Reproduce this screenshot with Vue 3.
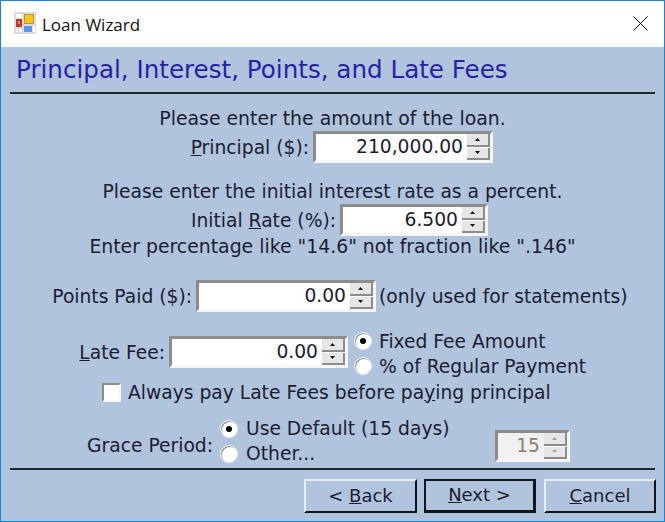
<script setup>
// Loan wizard dialog, step: principal, interest, points and late fees
const upPts = '2.5,0 5,3 0,3'
</script>

<template>
  <div class="window">
    <header class="titlebar">
      <svg class="app-icon" width="22" height="22" viewBox="0 0 22 22">
        <rect x="0" y="0" width="22" height="22" fill="#dcdcdc" />
        <rect x="2" y="2" width="6" height="4" fill="#fff" />
        <rect x="10" y="2" width="10" height="10" fill="#b8962e" />
        <rect x="11" y="3" width="8" height="8" fill="#fcc51e" />
        <rect x="2" y="7" width="6" height="8" fill="#c0392b" />
        <rect x="4" y="9" width="2" height="3" fill="#e08070" />
        <rect x="2" y="17" width="2" height="3" fill="#fff" />
        <rect x="5" y="17" width="3" height="3" fill="#fff" />
        <rect x="10" y="14" width="8" height="6" fill="#5f95e6" />
        <rect x="19" y="14" width="2" height="6" fill="#fff" />
      </svg>
      <span class="window-title">Loan Wizard</span>
      <svg class="close" width="15" height="15" viewBox="0 0 15 15">
        <path d="M0.5 0.5 L14.5 14.5 M14.5 0.5 L0.5 14.5" stroke="#000" stroke-width="1" fill="none" />
      </svg>
    </header>

    <main class="body">
      <h1 class="heading">Principal, Interest, Points, and Late Fees</h1>
      <div class="rule"></div>

      <p class="center line-1">Please enter the amount of the loan.</p>
      <div class="row row-principal">
        <label><u>P</u>rincipal ($):</label>
        <div class="spin w-principal">
          <span class="value">210,000.00</span>
          <div class="arrows">
            <span class="arrow"><svg width="5" height="3"><polygon :points="upPts" /></svg></span>
            <span class="arrow"><svg class="down" width="5" height="3"><polygon :points="upPts" /></svg></span>
          </div>
        </div>
      </div>

      <p class="center line-2">Please enter the initial interest rate as a percent.</p>
      <div class="row row-rate">
        <label>Initial <u>R</u>ate (%):</label>
        <div class="spin w-rate">
          <span class="value">6.500</span>
          <div class="arrows">
            <span class="arrow"><svg width="5" height="3"><polygon :points="upPts" /></svg></span>
            <span class="arrow"><svg class="down" width="5" height="3"><polygon :points="upPts" /></svg></span>
          </div>
        </div>
      </div>
      <p class="center line-3">Enter percentage like "14.6" not fraction like ".146"</p>

      <div class="row row-points">
        <label>Points Paid ($):</label>
        <div class="spin w-points">
          <span class="value">0.00</span>
          <div class="arrows">
            <span class="arrow"><svg width="5" height="3"><polygon :points="upPts" /></svg></span>
            <span class="arrow"><svg class="down" width="5" height="3"><polygon :points="upPts" /></svg></span>
          </div>
        </div>
        <span class="note">(only used for statements)</span>
      </div>

      <div class="row row-late">
        <label><u>L</u>ate Fee:</label>
        <div class="spin w-late">
          <span class="value">0.00</span>
          <div class="arrows">
            <span class="arrow"><svg width="5" height="3"><polygon :points="upPts" /></svg></span>
            <span class="arrow"><svg class="down" width="5" height="3"><polygon :points="upPts" /></svg></span>
          </div>
        </div>
        <div class="radios late-radios">
          <div class="radio-row"><span class="radio checked"></span>Fixed Fee Amount</div>
          <div class="radio-row"><span class="radio"></span>% of Regular Payment</div>
        </div>
      </div>

      <div class="row row-check">
        <span class="checkbox"></span>
        <span>Always pay Late Fees before pa<u>y</u>ing principal</span>
      </div>

      <div class="row row-grace">
        <label>Grace Period:</label>
        <div class="radios grace-radios">
          <div class="radio-row"><span class="radio checked"></span>Use Default (15 days)</div>
          <div class="radio-row"><span class="radio"></span>Other...</div>
        </div>
        <div class="spin w-grace disabled">
          <span class="value">15</span>
          <div class="arrows">
            <span class="arrow"><svg width="5" height="3"><polygon :points="upPts" /></svg></span>
            <span class="arrow"><svg class="down" width="5" height="3"><polygon :points="upPts" /></svg></span>
          </div>
        </div>
      </div>

      <div class="rule rule-bottom"></div>

      <footer class="buttons">
        <button class="back">&lt; <u>B</u>ack</button>
        <button class="primary"><u>N</u>ext &gt;</button>
        <button class="cancel"><u>C</u>ancel</button>
      </footer>
    </main>
  </div>
</template>

<style>
html, body {
  margin: 0;
  padding: 0;
}
</style>

<style scoped>
.window {
  box-sizing: border-box;
  width: 665px;
  height: 522px;
  border: 1px solid #0f86d9;
  display: flex;
  flex-direction: column;
  font-family: "DejaVu Sans", Verdana, sans-serif;
  font-size: 18.7px;
  color: #1c1c30;
  overflow: hidden;
}

.titlebar {
  box-sizing: border-box;
  height: 46px;
  background: #fff;
  display: flex;
  align-items: center;
  padding: 0 16px 2px 13px;
  flex-shrink: 0;
}
.app-icon {
  margin-right: 6px;
}
.window-title {
  font-family: "Open Sans", sans-serif;
  font-size: 17px;
  color: #111;
  flex: 1;
  margin-top: 2px;
}

.body {
  flex: 1;
  background: #b0c4de;
  padding: 0 9px;
}

.heading {
  margin: 0;
  padding: 7px 0 0 6px;
  height: 45px;
  box-sizing: border-box;
  font-size: 24.6px;
  line-height: 32px;
  font-weight: normal;
  color: #2a1fa5;
  white-space: nowrap;
}
.rule {
  height: 2px;
  background: #22272e;
}

p {
  margin: 0;
}
.center {
  text-align: center;
  line-height: 20px;
  white-space: nowrap;
}
.line-1 { margin-top: 15px; font-size: 18.85px; }
.line-2 { margin-top: 19px; }
.line-3 { margin-top: 1px; font-size: 18.85px; }

.row {
  display: flex;
  align-items: center;
  white-space: nowrap;
}
label {
  box-sizing: border-box;
  text-align: right;
  padding-right: 4px;
  flex-shrink: 0;
}
.row-principal { margin-top: 2px; }
.row-principal label { width: 303px; }
.row-rate { margin-top: 2px; }
.row-rate label { width: 330px; }
.row-points { margin-top: 23px; }
.row-points label { width: 186px; }
.row-late { margin-top: 24px; height: 32px; }
.row-late label { width: 159px; }
.row-check { padding-left: 92px; margin-top: 12px; height: 24px; }
.row-grace { margin-top: 12px; height: 48px; }
.row-grace label { width: 207px; margin-top: 10px; }

.spin {
  box-sizing: border-box;
  height: 32px;
  display: flex;
  align-items: stretch;
  background: #fff;
  border: 3px solid;
  border-color: #8c8c8c #f4f6f8 #f4f6f8 #8c8c8c;
  flex-shrink: 0;
}
.w-principal { width: 180px; }
.w-rate { width: 148px; }
.w-points { width: 180px; }
.w-late { width: 179px; }
.w-grace { width: 75px; margin-left: auto; margin-right: 85px; margin-top: 12px; }

.value {
  flex: 1;
  text-align: right;
  line-height: 26px;
  padding-right: 4px;
  color: #1c1c30;
}
.arrows {
  width: 23px;
  display: flex;
  flex-direction: column;
  gap: 1px;
  background: #fff;
}
.arrow {
  flex: 1;
  background: #e6e6e6;
  border-right: 2px solid #8c8c8c;
  border-bottom: 2px solid #8c8c8c;
  display: flex;
  align-items: center;
  justify-content: center;
}
.arrow svg {
  display: block;
  fill: #111;
}
.arrow .down {
  transform: scaleY(-1);
}

.disabled {
  background: #f0f0f0;
}
.disabled .value {
  color: #8a8074;
  background: #f0f0f0;
}
.disabled .arrow svg {
  fill: #a0a0a0;
}

.note {
  margin-left: 3px;
}

.radios {
  display: flex;
  flex-direction: column;
  gap: 5px;
}
.late-radios {
  margin-left: 6px;
  margin-top: 3px;
}
.grace-radios {
  margin-left: 3px;
  margin-top: 2px;
}
.grace-radios .radio-row {
  gap: 8px;
}
.radio-row {
  display: flex;
  align-items: center;
  gap: 7px;
  height: 20px;
}
.radio {
  box-sizing: border-box;
  width: 18px;
  height: 18px;
  border-radius: 50%;
  background: #fff;
  border: 1px solid #e8edf3;
  box-shadow: inset 1px 1px 0 #8c8c8c;
  display: flex;
  align-items: center;
  justify-content: center;
}
.radio.checked::after {
  content: "";
  width: 6px;
  height: 6px;
  border-radius: 50%;
  background: #000;
}

.checkbox {
  box-sizing: border-box;
  width: 19px;
  height: 19px;
  background: #fff;
  border: 2px solid;
  border-color: #8c8c8c #f4f6f8 #f4f6f8 #8c8c8c;
  margin-right: 7px;
  flex-shrink: 0;
}

.rule-bottom {
  margin-top: 4px;
}

.buttons {
  display: flex;
  justify-content: flex-end;
  gap: 7px;
  margin: 9px -1px 0 0;
}
button {
  box-sizing: border-box;
  width: 112px;
  height: 34px;
  padding: 0 0 2px;
  font: inherit;
  font-size: 18px;
  color: #1c1c30;
  background: #b0c4de;
  border: 2px solid;
  border-color: #e6edf5 #10151c #10151c #e6edf5;
}
button.back {
  width: 113px;
}
button.cancel {
  margin-left: 1px;
}
button.primary {
  border: 2px solid #10151c;
  border-right-width: 3px;
  border-bottom-width: 3px;
}
</style>
